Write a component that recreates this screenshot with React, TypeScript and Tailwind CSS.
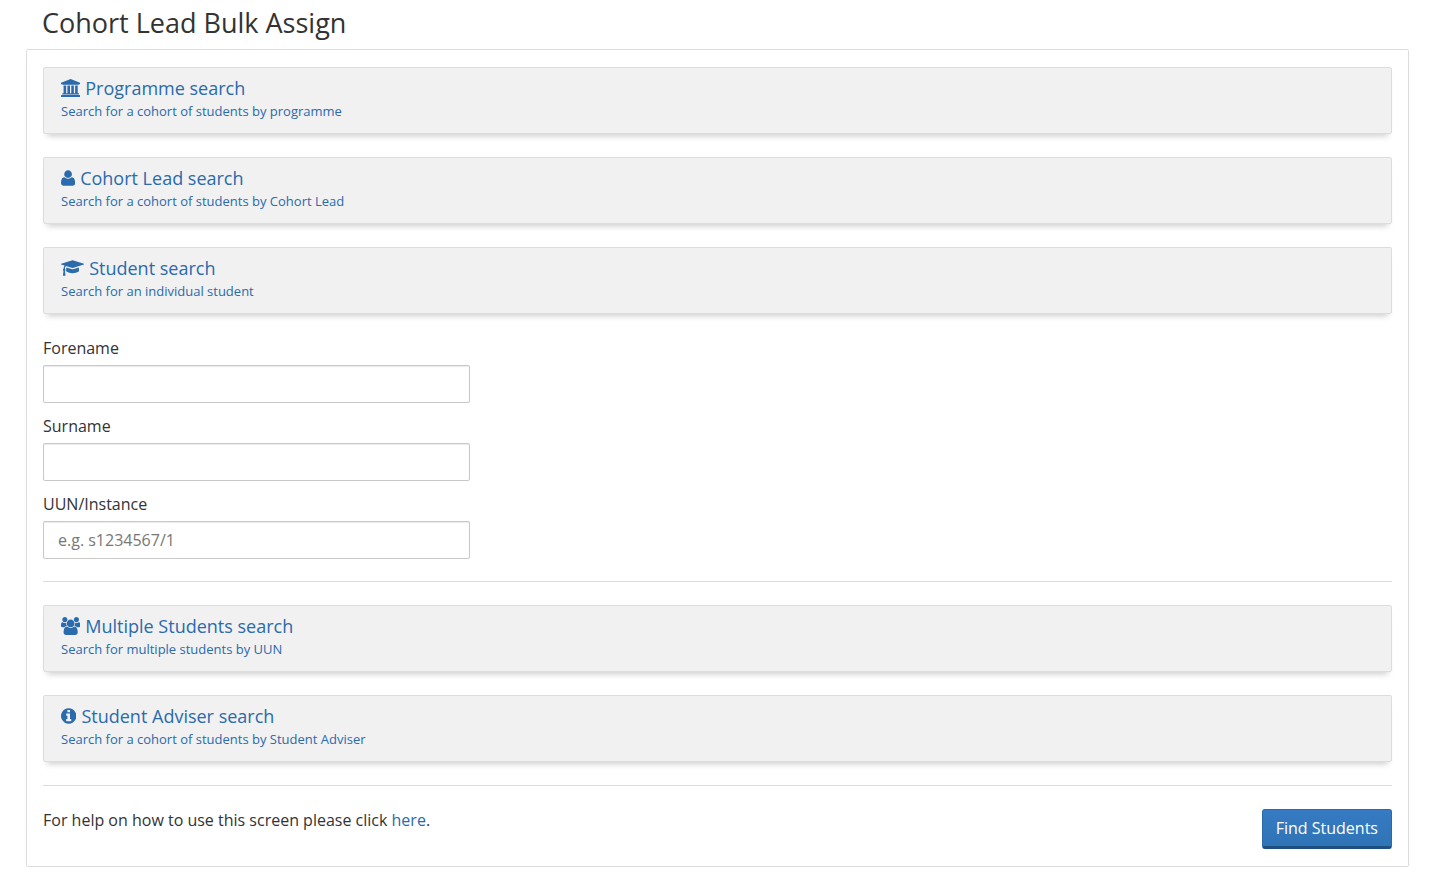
import { ReactNode } from "react";

type IconProps = {
  viewBox: string;
  path: string;
};

const Icon = ({ viewBox, path }: IconProps) => {
  return (
    <svg
      viewBox={viewBox}
      className="h-[18px] w-auto shrink-0"
      fill="currentColor"
      aria-hidden="true"
    >
      <path d={path} />
    </svg>
  );
};

const UniversityIcon = () => (
  <Icon
    viewBox="0 0 1920 1792"
    path="M960 0l960 384v128h-128q0 26-20.5 45t-48.5 19h-1526q-28 0-48.5-19t-20.5-45h-128v-128zm-704 640h256v768h128v-768h256v768h128v-768h256v768h128v-768h256v768h59q28 0 48.5 19t20.5 45v64h-1664v-64q0-26 20.5-45t48.5-19h59v-768zm1595 960q28 0 48.5 19t20.5 45v128h-1920v-128q0-26 20.5-45t48.5-19h1782z"
  />
);

const UserIcon = () => (
  <Icon
    viewBox="0 -128 1408 1792"
    path="M1408 1277q0 120-73 189.5t-194 69.5h-874q-121 0-194-69.5T0 1277q0-53 3.5-103.5t14-109T44 956t43-97.5 62-81 85.5-53.5T346 704q9 0 42 21.5t74.5 48 108 48T704 843t133.5-21.5 108-48 74.5-48 42-21.5q61 0 111.5 20t85.5 53.5 62 81 43 97.5 26.5 108.5 14 109 3.5 103.5zm-320-893q0 159-112.5 271.5T704 768 432.5 655.5 320 384t112.5-271.5T704 0t271.5 112.5T1088 384z"
  />
);

const GraduationCapIcon = () => (
  <Icon
    viewBox="0 0 2304 1792"
    path="M1774 836l18 316q4 69-82 128t-235 93.5-323 34.5-323-34.5-235-93.5-82-128l18-316 574 181q22 7 48 7t48-7zm530-324q0 23-22 31l-1120 352q-4 1-10 1t-10-1l-652-206q-43 34-71 111.5t-34 178.5q63 36 63 109 0 69-58 107l58 433q2 14-8 25-9 11-24 11h-192q-15 0-24-11-10-11-8-25l58-433q-58-38-58-107 0-73 65-111 11-207 98-330l-333-104q-22-8-22-31t22-31l1120-352q4-1 10-1t10 1l1120 352q22 8 22 31z"
  />
);

const UsersIcon = () => (
  <Icon
    viewBox="0 0 1920 1792"
    path="M593 896q-162 5-265 128h-134q-82 0-138-40.5t-56-118.5q0-353 124-353 6 0 43.5 21t97.5 42.5 119 21.5q67 0 133-23-5 37-5 66 0 139 81 256zm1071 637q0 120-73 189.5t-194 69.5h-874q-121 0-194-69.5t-73-189.5q0-53 3.5-103.5t14-109 26.5-108.5 43-97.5 62-81 85.5-53.5 111.5-20q10 0 43 21.5t73 48 107 48 135 21.5 135-21.5 107-48 73-48 43-21.5q61 0 111.5 20t85.5 53.5 62 81 43 97.5 26.5 108.5 14 109 3.5 103.5zm-1024-1277q0 106-75 181t-181 75-181-75-75-181 75-181 181-75 181 75 75 181zm704 384q0 159-112.5 271.5t-271.5 112.5-271.5-112.5-112.5-271.5 112.5-271.5 271.5-112.5 271.5 112.5 112.5 271.5zm576 225q0 78-56 118.5t-138 40.5h-134q-103-123-265-128 81-117 81-256 0-29-5-66 66 23 133 23 59 0 119-21.5t97.5-42.5 43.5-21q124 0 124 353zm-128-609q0 106-75 181t-181 75-181-75-75-181 75-181 181-75 181 75 75 181z"
  />
);

const InfoIcon = () => (
  <Icon
    viewBox="128 0 1536 1792"
    path="M1152 1376v-160q0-14-9-23t-23-9h-96v-512q0-14-9-23t-23-9h-320q-14 0-23 9t-9 23v160q0 14 9 23t23 9h96v320h-96q-14 0-23 9t-9 23v160q0 14 9 23t23 9h448q14 0 23-9t9-23zm-128-896v-160q0-14-9-23t-23-9h-192q-14 0-23 9t-9 23v160q0 14 9 23t23 9h192q14 0 23-9t9-23zm640 416q0 209-103 385.5t-279.5 279.5-385.5 103-385.5-103-279.5-279.5-103-385.5 103-385.5 279.5-279.5 385.5-103 385.5 103 279.5 279.5 103 385.5z"
  />
);

type SearchPanelProps = {
  icon: ReactNode;
  title: string;
  description: string;
};

const SearchPanel = ({ icon, title, description }: SearchPanelProps) => {
  return (
    <button
      type="button"
      className="block w-full h-[67px] px-[17px] pb-1 text-left text-[#2a6aad] bg-[#f1f1f1] border border-[#dddddd] rounded-xs shadow-[0_6px_6px_-4px_rgba(0,0,0,0.2)]"
    >
      <span className="flex items-center gap-[5px] text-lg leading-6">
        {icon}
        {title}
      </span>
      <span className="block text-[13px] leading-[22px]">{description}</span>
    </button>
  );
};

type TextFieldProps = {
  id: string;
  label: string;
  placeholder?: string;
};

const TextField = ({ id, label, placeholder }: TextFieldProps) => {
  return (
    <div className="w-[427px] max-w-full">
      <label htmlFor={id} className="block mb-[5px] leading-6">
        {label}
      </label>
      <input
        id={id}
        type="text"
        placeholder={placeholder}
        className="block w-full h-[38px] px-[14px] border border-[#c8c8c8] rounded-xs shadow-[inset_0_1px_1px_rgba(0,0,0,0.08)] placeholder:text-[#777777]"
      />
    </div>
  );
};

const App = () => {
  return (
    <main className="pl-[26px] pr-[43px] pt-[3px] text-base text-[#333333] font-['Open_Sans',sans-serif]">
      <h1 className="pl-4 mb-[6px] text-[27px] leading-10">
        Cohort Lead Bulk Assign
      </h1>
      <form className="px-4 py-[17px] border border-[#dddddd] rounded-xs shadow-[0_6px_6px_-4px_rgba(0,0,0,0.2)]">
        <div className="flex flex-col gap-[23px]">
          <SearchPanel
            icon={<UniversityIcon />}
            title="Programme search"
            description="Search for a cohort of students by programme"
          />
          <SearchPanel
            icon={<UserIcon />}
            title="Cohort Lead search"
            description="Search for a cohort of students by Cohort Lead"
          />
          <SearchPanel
            icon={<GraduationCapIcon />}
            title="Student search"
            description="Search for an individual student"
          />
        </div>
        <div className="flex flex-col gap-[11px] my-[22px]">
          <TextField id="forename" label="Forename" />
          <TextField id="surname" label="Surname" />
          <TextField id="uun" label="UUN/Instance" placeholder="e.g. s1234567/1" />
        </div>
        <hr className="mb-[23px] border-[#dddddd]" />
        <div className="flex flex-col gap-[23px]">
          <SearchPanel
            icon={<UsersIcon />}
            title="Multiple Students search"
            description="Search for multiple students by UUN"
          />
          <SearchPanel
            icon={<InfoIcon />}
            title="Student Adviser search"
            description="Search for a cohort of students by Student Adviser"
          />
        </div>
        <hr className="my-[23px] border-[#dddddd]" />
        <div className="flex items-start justify-between gap-4">
          <p className="leading-[22px]">
            For help on how to use this screen please click{" "}
            <a href="#help" className="text-[#2a6aad]">
              here
            </a>
            .
          </p>
          <button
            type="submit"
            className="h-10 px-[13px] shrink-0 text-white bg-linear-to-b from-[#367bc3] to-[#2f74b5] border border-b-3 border-[#2a6aa5] border-b-[#1d4f80] rounded-[3px]"
          >
            Find Students
          </button>
        </div>
      </form>
    </main>
  );
};

export default App;
